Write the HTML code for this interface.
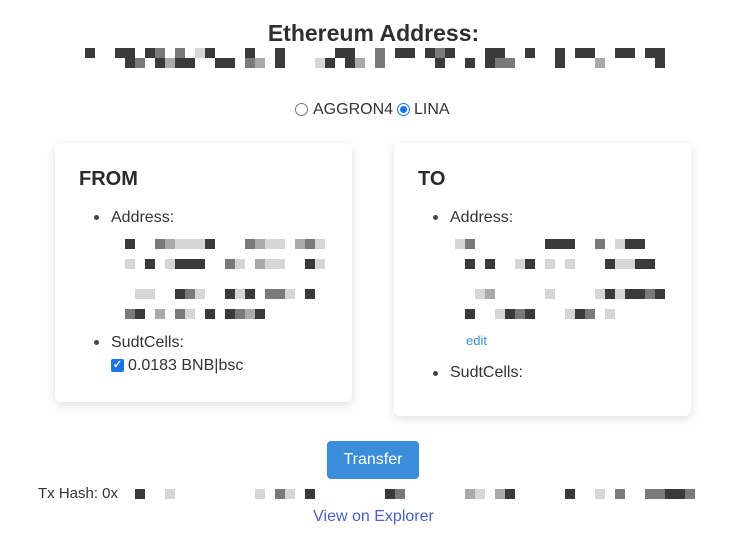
<!DOCTYPE html>
<html><head><meta charset="utf-8"><style>
body{margin:0;width:747px;height:544px;background:#fff;font-family:"Liberation Sans",sans-serif;color:#333;position:relative;overflow:hidden}
.a{position:absolute}
.b{position:absolute;width:10px;height:10px}
.d{background:#3a3a3a}.m{background:#7a7a7a}.l{background:#d6d6d6}.g{background:#aaa}
.card{position:absolute;background:#fff;border-radius:6px;box-shadow:0 3px 10px rgba(0,0,0,.13)}
h2{position:absolute;margin:0;font-size:20px;font-weight:bold;color:#2a2a2a}
.li{position:absolute;font-size:16px;color:#333}
.dot{position:absolute;width:5px;height:5px;border-radius:50%;background:#444}
</style></head><body>
<div class="a" style="left:0;width:747px;top:20px;text-align:center;font-size:23px;font-weight:bold;color:#2e2e2e">Ethereum Address:</div>
<div class="b d" style="left:85px;top:48px"></div><div class="b d" style="left:115px;top:48px"></div><div class="b d" style="left:125px;top:48px"></div><div class="b d" style="left:145px;top:48px"></div><div class="b m" style="left:155px;top:48px"></div><div class="b m" style="left:175px;top:48px"></div><div class="b l" style="left:195px;top:48px"></div><div class="b d" style="left:205px;top:48px"></div><div class="b d" style="left:245px;top:48px"></div><div class="b d" style="left:275px;top:48px"></div><div class="b d" style="left:335px;top:48px"></div><div class="b d" style="left:345px;top:48px"></div><div class="b m" style="left:375px;top:48px"></div><div class="b d" style="left:395px;top:48px"></div><div class="b d" style="left:405px;top:48px"></div><div class="b d" style="left:425px;top:48px"></div><div class="b m" style="left:435px;top:48px"></div><div class="b d" style="left:445px;top:48px"></div><div class="b d" style="left:485px;top:48px"></div><div class="b d" style="left:495px;top:48px"></div><div class="b d" style="left:525px;top:48px"></div><div class="b d" style="left:555px;top:48px"></div><div class="b d" style="left:575px;top:48px"></div><div class="b d" style="left:585px;top:48px"></div><div class="b d" style="left:615px;top:48px"></div><div class="b d" style="left:625px;top:48px"></div><div class="b d" style="left:645px;top:48px"></div><div class="b d" style="left:655px;top:48px"></div>
<div class="b d" style="left:125px;top:58px"></div><div class="b m" style="left:135px;top:58px"></div><div class="b d" style="left:155px;top:58px"></div><div class="b g" style="left:165px;top:58px"></div><div class="b d" style="left:175px;top:58px"></div><div class="b d" style="left:185px;top:58px"></div><div class="b d" style="left:215px;top:58px"></div><div class="b d" style="left:225px;top:58px"></div><div class="b m" style="left:245px;top:58px"></div><div class="b g" style="left:255px;top:58px"></div><div class="b d" style="left:275px;top:58px"></div><div class="b l" style="left:315px;top:58px"></div><div class="b d" style="left:325px;top:58px"></div><div class="b d" style="left:345px;top:58px"></div><div class="b g" style="left:355px;top:58px"></div><div class="b m" style="left:375px;top:58px"></div><div class="b d" style="left:435px;top:58px"></div><div class="b d" style="left:465px;top:58px"></div><div class="b d" style="left:485px;top:58px"></div><div class="b m" style="left:495px;top:58px"></div><div class="b m" style="left:505px;top:58px"></div><div class="b d" style="left:555px;top:58px"></div><div class="b g" style="left:595px;top:58px"></div><div class="b d" style="left:655px;top:58px"></div>
<div class="a" style="left:295px;top:103px;width:13px;height:13px;border:1px solid #777;border-radius:50%;box-sizing:border-box"></div>
<div class="a" style="left:313px;top:101px;font-size:16px;color:#333">AGGRON4</div>
<div class="a" style="left:397px;top:103px;width:13px;height:13px;border:1px solid #1a73e8;border-radius:50%;box-sizing:border-box;background:#fff"><div style="margin:2px;width:7px;height:7px;border-radius:50%;background:#1a73e8"></div></div>
<div class="a" style="left:414px;top:101px;font-size:16px;color:#333">LINA</div>

<div class="card" style="left:55px;top:143px;width:297px;height:259px"></div>
<h2 style="left:79px;top:168px">FROM</h2>
<div class="dot" style="left:94px;top:215px"></div><div class="li" style="left:111px;top:209px">Address:</div>
<div class="b d" style="left:125px;top:239px"></div><div class="b m" style="left:155px;top:239px"></div><div class="b g" style="left:165px;top:239px"></div><div class="b l" style="left:175px;top:239px"></div><div class="b l" style="left:185px;top:239px"></div><div class="b l" style="left:195px;top:239px"></div><div class="b d" style="left:205px;top:239px"></div><div class="b m" style="left:245px;top:239px"></div><div class="b g" style="left:255px;top:239px"></div><div class="b l" style="left:265px;top:239px"></div><div class="b l" style="left:275px;top:239px"></div><div class="b g" style="left:295px;top:239px"></div><div class="b m" style="left:305px;top:239px"></div><div class="b l" style="left:315px;top:239px"></div>
<div class="b l" style="left:125px;top:259px"></div><div class="b d" style="left:145px;top:259px"></div><div class="b l" style="left:165px;top:259px"></div><div class="b d" style="left:175px;top:259px"></div><div class="b d" style="left:185px;top:259px"></div><div class="b d" style="left:195px;top:259px"></div><div class="b m" style="left:225px;top:259px"></div><div class="b l" style="left:235px;top:259px"></div><div class="b g" style="left:255px;top:259px"></div><div class="b l" style="left:265px;top:259px"></div><div class="b l" style="left:275px;top:259px"></div><div class="b d" style="left:305px;top:259px"></div><div class="b l" style="left:315px;top:259px"></div>
<div class="b l" style="left:135px;top:289px"></div><div class="b l" style="left:145px;top:289px"></div><div class="b d" style="left:175px;top:289px"></div><div class="b m" style="left:185px;top:289px"></div><div class="b l" style="left:195px;top:289px"></div><div class="b d" style="left:225px;top:289px"></div><div class="b l" style="left:235px;top:289px"></div><div class="b d" style="left:245px;top:289px"></div><div class="b m" style="left:265px;top:289px"></div><div class="b m" style="left:275px;top:289px"></div><div class="b l" style="left:285px;top:289px"></div><div class="b d" style="left:305px;top:289px"></div>
<div class="b m" style="left:125px;top:309px"></div><div class="b d" style="left:135px;top:309px"></div><div class="b g" style="left:155px;top:309px"></div><div class="b m" style="left:175px;top:309px"></div><div class="b l" style="left:185px;top:309px"></div><div class="b d" style="left:205px;top:309px"></div><div class="b d" style="left:225px;top:309px"></div><div class="b m" style="left:235px;top:309px"></div><div class="b g" style="left:245px;top:309px"></div><div class="b d" style="left:255px;top:309px"></div>
<div class="dot" style="left:94px;top:340px"></div><div class="li" style="left:111px;top:334px">SudtCells:</div>
<div class="a" style="left:111px;top:359px;width:13px;height:13px;background:#1a73e8;border-radius:2px;color:#fff;font-size:11px;line-height:13px;text-align:center;font-weight:bold">✓</div>
<div class="li" style="left:128px;top:357px">0.0183 BNB|bsc</div>

<div class="card" style="left:394px;top:143px;width:297px;height:273px"></div>
<h2 style="left:418px;top:168px">TO</h2>
<div class="dot" style="left:433px;top:215px"></div><div class="li" style="left:450px;top:209px">Address:</div>
<div class="b l" style="left:455px;top:239px"></div><div class="b m" style="left:465px;top:239px"></div><div class="b d" style="left:545px;top:239px"></div><div class="b d" style="left:555px;top:239px"></div><div class="b d" style="left:565px;top:239px"></div><div class="b m" style="left:595px;top:239px"></div><div class="b l" style="left:615px;top:239px"></div><div class="b d" style="left:625px;top:239px"></div><div class="b d" style="left:635px;top:239px"></div>
<div class="b d" style="left:465px;top:259px"></div><div class="b d" style="left:485px;top:259px"></div><div class="b l" style="left:515px;top:259px"></div><div class="b d" style="left:525px;top:259px"></div><div class="b l" style="left:545px;top:259px"></div><div class="b l" style="left:565px;top:259px"></div><div class="b d" style="left:605px;top:259px"></div><div class="b l" style="left:615px;top:259px"></div><div class="b l" style="left:625px;top:259px"></div><div class="b d" style="left:635px;top:259px"></div><div class="b d" style="left:645px;top:259px"></div>
<div class="b l" style="left:475px;top:289px"></div><div class="b g" style="left:485px;top:289px"></div><div class="b l" style="left:545px;top:289px"></div><div class="b l" style="left:595px;top:289px"></div><div class="b d" style="left:605px;top:289px"></div><div class="b l" style="left:615px;top:289px"></div><div class="b d" style="left:625px;top:289px"></div><div class="b d" style="left:635px;top:289px"></div><div class="b m" style="left:645px;top:289px"></div><div class="b d" style="left:655px;top:289px"></div>
<div class="b d" style="left:465px;top:309px"></div><div class="b l" style="left:495px;top:309px"></div><div class="b d" style="left:505px;top:309px"></div><div class="b m" style="left:515px;top:309px"></div><div class="b d" style="left:525px;top:309px"></div><div class="b l" style="left:565px;top:309px"></div><div class="b d" style="left:575px;top:309px"></div><div class="b m" style="left:585px;top:309px"></div><div class="b l" style="left:605px;top:309px"></div>
<div class="a" style="left:466px;top:333px;font-size:13px;color:#3a8fd9">edit</div>
<div class="dot" style="left:433px;top:371px"></div><div class="li" style="left:450px;top:364px">SudtCells:</div>

<div class="a" style="left:327px;top:441px;width:92px;height:38px;background:#3a8dd8;border-radius:4px;color:#fff;font-size:16px;line-height:38px;text-align:center">Transfer</div>
<div class="a" style="left:38px;top:485px;font-size:15px;color:#333">Tx Hash: 0x</div>
<div class="b d" style="left:135px;top:489px"></div><div class="b l" style="left:165px;top:489px"></div><div class="b l" style="left:255px;top:489px"></div><div class="b m" style="left:275px;top:489px"></div><div class="b l" style="left:285px;top:489px"></div><div class="b d" style="left:305px;top:489px"></div><div class="b d" style="left:385px;top:489px"></div><div class="b m" style="left:395px;top:489px"></div><div class="b g" style="left:465px;top:489px"></div><div class="b l" style="left:475px;top:489px"></div><div class="b g" style="left:495px;top:489px"></div><div class="b d" style="left:505px;top:489px"></div><div class="b d" style="left:565px;top:489px"></div><div class="b l" style="left:595px;top:489px"></div><div class="b m" style="left:615px;top:489px"></div><div class="b m" style="left:645px;top:489px"></div><div class="b m" style="left:655px;top:489px"></div><div class="b d" style="left:665px;top:489px"></div><div class="b d" style="left:675px;top:489px"></div><div class="b m" style="left:685px;top:489px"></div>
<div class="a" style="left:0;width:747px;top:508px;text-align:center;font-size:16px;color:#4a5fc1">View on Explorer</div>
</body></html>
